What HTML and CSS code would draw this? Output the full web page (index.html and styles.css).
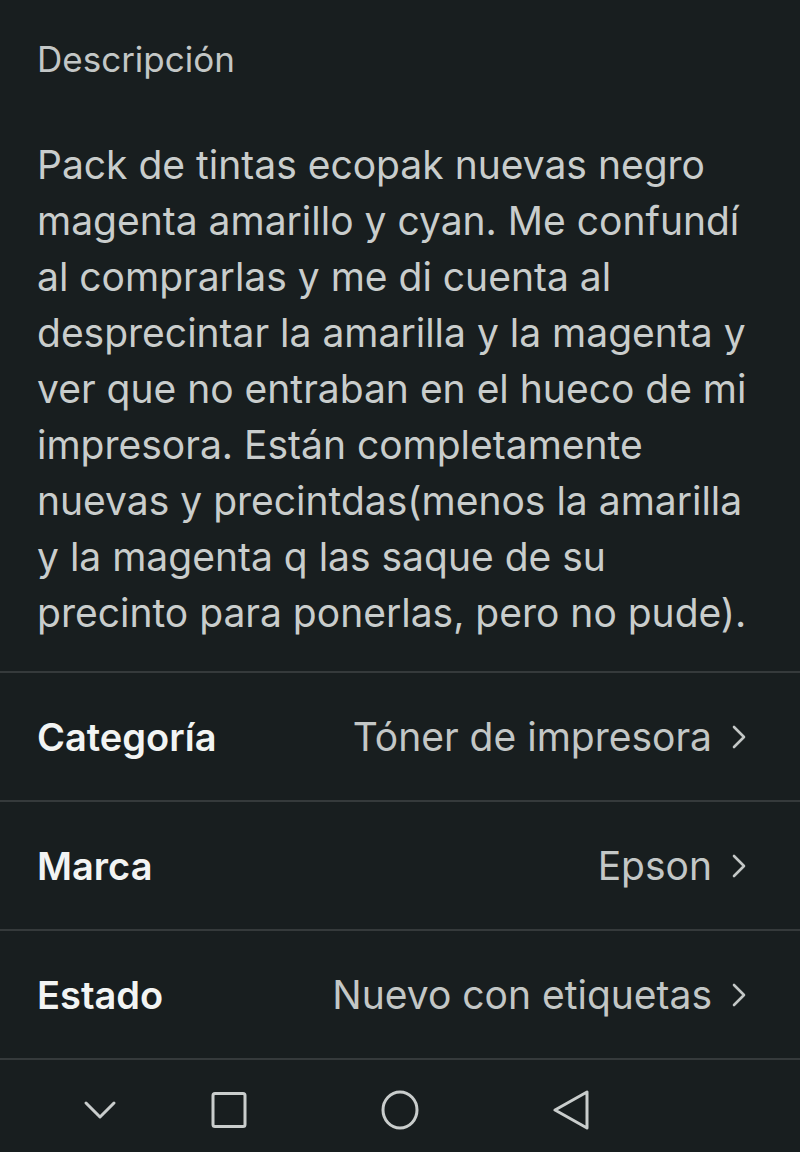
FILE: index.html
```html
<!DOCTYPE html>
<html lang="es">
<head>
    <meta charset="UTF-8">
    <meta name="viewport" content="width=device-width, initial-scale=1.0">
    <title>Descripción</title>
    <link rel="stylesheet" href="styles.css">
</head>
<body>

    <div class="screen">
        <!-- Description block -->
        <section class="description">
            <h2 class="label">Descripción</h2>
            <p class="text">Pack de tintas ecopak nuevas negro magenta amarillo y cyan. Me confundí al comprarlas y me di cuenta al desprecintar la amarilla y la magenta y ver que no entraban en el hueco de mi impresora. Están completamente nuevas y precintdas(menos la amarilla y la magenta q las saque de su precinto para ponerlas, pero no pude).</p>
        </section>

        <!-- Attribute rows -->
        <ul class="attributes">
            <li class="row">
                <span class="row-name">Categoría</span>
                <span class="row-value">Tóner de impresora
                    <svg class="chevron" viewBox="0 0 14 24" width="14" height="24"><path d="M2 2 L12 12 L2 22" /></svg>
                </span>
            </li>
            <li class="row">
                <span class="row-name">Marca</span>
                <span class="row-value">Epson
                    <svg class="chevron" viewBox="0 0 14 24" width="14" height="24"><path d="M2 2 L12 12 L2 22" /></svg>
                </span>
            </li>
            <li class="row">
                <span class="row-name">Estado</span>
                <span class="row-value">Nuevo con etiquetas
                    <svg class="chevron" viewBox="0 0 14 24" width="14" height="24"><path d="M2 2 L12 12 L2 22" /></svg>
                </span>
            </li>
        </ul>

        <!-- System navigation bar -->
        <nav class="navbar">
            <svg class="nav-icon" viewBox="0 0 40 40" width="40" height="40"><path d="M6 13 L20 27 L34 13" /></svg>
            <svg class="nav-icon" viewBox="0 0 40 40" width="40" height="40"><rect x="4" y="3.5" width="32" height="33" rx="2" /></svg>
            <svg class="nav-icon" viewBox="0 0 40 40" width="40" height="40"><ellipse cx="20" cy="20" rx="17" ry="18" /></svg>
            <svg class="nav-icon" viewBox="0 0 40 40" width="40" height="40"><path d="M36 2 L36 38 L4 20 Z" /></svg>
        </nav>
    </div>

</body>
</html>
```

FILE: styles.css
```css
* {
    margin: 0;
    padding: 0;
    box-sizing: border-box;
}

body {
    font-family: 'Inter', 'Noto Sans', sans-serif;
    background-color: #181e1f;
    color: #c9cdcc;
    width: 800px;
    height: 1152px;
    overflow: hidden;
}

.screen {
    display: flex;
    flex-direction: column;
    height: 1152px;
}

/* Description */
.description {
    padding: 36px 40px 30px 37px;
    border-bottom: 2px solid #353a3b;
}

.label {
    font-size: 35px;
    font-weight: 400;
    line-height: 46px;
    color: #c3c7c6;
    margin-bottom: 55px;
}

.text {
    font-size: 39px;
    line-height: 56px;
    color: #c9cdcc;
}

/* Attribute rows */
.attributes {
    list-style: none;
}

.row {
    display: flex;
    justify-content: space-between;
    align-items: center;
    height: 129px;
    padding: 0 54px 0 37px;
    border-bottom: 2px solid #353a3b;
}

.row-name {
    font-size: 38px;
    font-weight: 600;
    color: #f2f4f3;
}

.row-value {
    display: flex;
    align-items: center;
    gap: 20px;
    font-size: 39px;
    color: #c3c7c6;
}

.chevron {
    fill: none;
    stroke: #c3c7c6;
    stroke-width: 2.6;
    stroke-linecap: round;
    stroke-linejoin: round;
}

/* Navigation bar */
.navbar {
    flex: 1;
    display: flex;
    align-items: center;
    padding: 8px 0 0 80px;
}

.nav-icon {
    fill: none;
    stroke: #c9cdcc;
    stroke-width: 3;
    stroke-linecap: round;
    stroke-linejoin: round;
}

.nav-icon:nth-child(1) { margin-right: 89px; }
.nav-icon:nth-child(2) { margin-right: 131px; }
.nav-icon:nth-child(3) { margin-right: 131px; }
```
